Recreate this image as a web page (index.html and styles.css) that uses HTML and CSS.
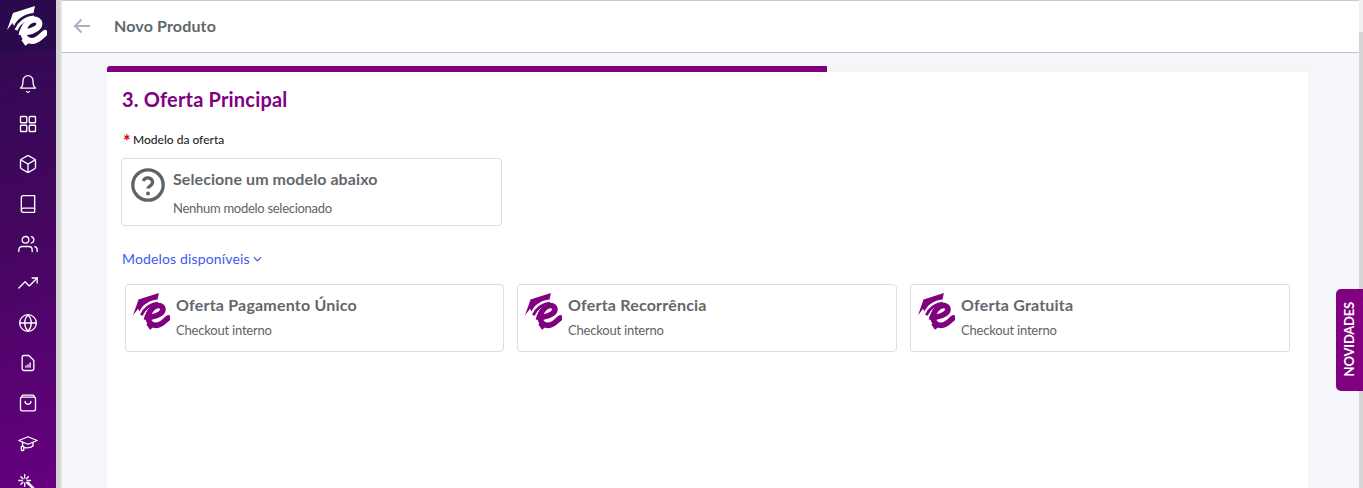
FILE: index.html
```html
<!DOCTYPE html>
<html lang="en">
<head>
  <meta charset="UTF-8" />
  <title>Novo Produto</title>
  <link rel="stylesheet" href="styles.css">
</head>
<body>
  <svg class="defs" width="0" height="0">
    <symbol id="logo" viewBox="0 0 40 40">
      <path d="M0 24 L6 7 L28 0 L26.500 7 C17 8 10 13 7 20 L5.500 17 Z" fill="currentColor"/>
      <path d="M9 24 C12 17 19 11.500 27 11" fill="none" stroke="currentColor" stroke-width="3"/>
      <path d="M13 29 C14 24 17 19 21 15.500" fill="none" stroke="currentColor" stroke-width="3"/>
      <path d="M20 26 C27 25 34 21 32 16 C29 11 20 14 17 23 C15 30 19 35 25 35 C31 35 34 30 38 27" fill="none" stroke="currentColor" stroke-width="6" stroke-linecap="round"/>
      <path d="M16 33 L20 38.500" fill="none" stroke="currentColor" stroke-width="4"/>
    </symbol>
  </svg>

  <!-- Sidebar -->
  <nav class="sidebar">
    <div class="sidebar-logo"><svg class="logo-white"><use href="#logo"/></svg></div>
    <ul class="sidebar-menu">
      <li><svg viewBox="0 0 24 24"><path d="M18 8A6 6 0 0 0 6 8c0 7-3 9-3 9h18s-3-2-3-9"/><path d="M13.730 21a2 2 0 0 1-3.460 0"/></svg></li>
      <li><svg viewBox="0 0 24 24"><rect x="3" y="3" width="7.500" height="7.500" rx="1"/><rect x="13.500" y="3" width="7.500" height="7.500" rx="1"/><rect x="13.500" y="13.500" width="7.500" height="7.500" rx="1"/><rect x="3" y="13.500" width="7.500" height="7.500" rx="1"/></svg></li>
      <li><svg viewBox="0 0 24 24"><path d="M21 16V8a2 2 0 0 0-1-1.730l-7-4a2 2 0 0 0-2 0l-7 4A2 2 0 0 0 3 8v8a2 2 0 0 0 1 1.730l7 4a2 2 0 0 0 2 0l7-4A2 2 0 0 0 21 16z"/><path d="M3.270 6.960 12 12.010l8.730-5.050"/><path d="M12 22.080V12"/></svg></li>
      <li><svg viewBox="0 0 24 24"><path d="M4 19.500A2.500 2.500 0 0 1 6.500 17H20"/><path d="M6.500 2H20v20H6.500A2.500 2.500 0 0 1 4 19.500v-15A2.500 2.500 0 0 1 6.500 2z"/></svg></li>
      <li><svg viewBox="0 0 24 24"><path d="M17 21v-2a4 4 0 0 0-4-4H5a4 4 0 0 0-4 4v2"/><circle cx="9" cy="7" r="4"/><path d="M23 21v-2a4 4 0 0 0-3-3.870"/><path d="M16 3.130a4 4 0 0 1 0 7.750"/></svg></li>
      <li><svg viewBox="0 0 24 24"><path d="M1 18l7.500-7.500 5 5L23 6"/><path d="M17 6h6v6"/></svg></li>
      <li><svg viewBox="0 0 24 24"><circle cx="12" cy="12" r="10"/><path d="M2 12h20"/><path d="M12 2a15.300 15.300 0 0 1 4 10 15.300 15.300 0 0 1-4 10 15.300 15.300 0 0 1-4-10 15.300 15.300 0 0 1 4-10z"/></svg></li>
      <li><svg viewBox="0 0 24 24"><path d="M13 3H7a2 2 0 0 0-2 2v14a2 2 0 0 0 2 2h10a2 2 0 0 0 2-2V9z"/><path d="M9.500 17v-1.500M12 17v-3M14.500 17v-5"/></svg></li>
      <li><svg viewBox="0 0 24 24"><rect x="3" y="5" width="18" height="16.500" rx="2"/><path d="M4 5l1.500-2.500h13L20 5"/><path d="M8.500 10a3.500 3.500 0 0 0 7 0"/></svg></li>
      <li><svg viewBox="0 0 24 24"><path d="M23 9 12 4.500 1 9l11 4.500z"/><path d="M18 11.500v4c-3 2.500-7 2.500-10 2"/><path d="M5.500 11v5"/><rect x="4" y="16" width="3" height="5" rx=".5"/></svg></li>
      <li class="wand"><svg viewBox="0 0 24 24"><path d="M8 2v4M8 12v4M1 9h4M11 9h4M3.500 4.500l2.500 2.500M10 11l2.500 2.500M12.500 4.500 10 7M6 11l-2.500 2.500"/><path class="wand-stick" d="M12 12l12 12"/></svg></li>
    </ul>
  </nav>
  <div class="sidebar-shadow"></div>

  <!-- Main -->
  <div class="main">
    <header class="topbar">
      <svg class="back-icon" viewBox="0 0 18 16"><path d="M17 8H2M8.500 1.500 2 8l6.500 6.500"/></svg>
      <span class="topbar-title">Novo Produto</span>
    </header>

    <div class="content">
      <div class="wizard">
        <div class="progress"><div class="progress-fill"></div></div>
        <div class="panel">
          <h1 class="panel-title">3. Oferta Principal</h1>
          <div class="field-label"><span class="required">*</span>Modelo da oferta</div>

          <div class="model-box">
            <svg class="question-icon" viewBox="0 0 34 34">
              <circle cx="17" cy="17" r="15.200"/>
              <path d="M12.300 13a4.800 4.800 0 0 1 9.300 1.500c0 3.200-4.700 3.800-4.700 6"/>
              <circle class="dot" cx="17" cy="25.500" r="1.900"/>
            </svg>
            <div class="model-text">
              <div class="model-title">Selecione um modelo abaixo</div>
              <div class="model-sub model-sub-box">Nenhum modelo selecionado</div>
            </div>
          </div>

          <a class="models-link">Modelos disponíveis
            <svg viewBox="0 0 10 6"><path d="M1 1l4 4 4-4"/></svg>
          </a>

          <div class="model-grid">
            <div class="model-card">
              <svg class="logo-purple"><use href="#logo"/></svg>
              <div>
                <div class="model-title">Oferta Pagamento Único</div>
                <div class="model-sub">Checkout interno</div>
              </div>
            </div>
            <div class="model-card">
              <svg class="logo-purple"><use href="#logo"/></svg>
              <div>
                <div class="model-title">Oferta Recorrência</div>
                <div class="model-sub">Checkout interno</div>
              </div>
            </div>
            <div class="model-card">
              <svg class="logo-purple"><use href="#logo"/></svg>
              <div>
                <div class="model-title">Oferta Gratuita</div>
                <div class="model-sub">Checkout interno</div>
              </div>
            </div>
          </div>
        </div>
      </div>
    </div>
  </div>

  <div class="scrollbar"><div class="scrollbar-thumb"></div></div>

  <div class="novidades"><span>NOVIDADES</span></div>
</body>
</html>
```

FILE: styles.css
```css
* {
  box-sizing: border-box;
}

html, body {
  height: 100%;
}

body {
  margin: 0;
  display: flex;
  height: 488px;
  overflow: hidden;
  font-family: Lato, Arial, sans-serif;
  background-color: #f4f6fb;
  position: relative;
}

.defs {
  position: absolute;
}

/* Sidebar */
.sidebar {
  width: 56px;
  flex-shrink: 0;
  overflow: hidden;
  background: linear-gradient(160deg, #2f0a50 0%, #43065e 45%, #660080 100%);
}

.sidebar-logo {
  height: 51px;
  background-color: #2a0a4c;
  display: flex;
  padding: 6px 0 0 7px;
}

.logo-white {
  width: 40px;
  height: 40px;
  color: #fff;
}

.sidebar-menu {
  list-style-type: none;
  margin: 0;
  padding: 13px 0 0;
}

.sidebar-menu li {
  height: 39.9px;
  display: flex;
  justify-content: center;
  align-items: center;
}

.sidebar-menu svg {
  width: 20px;
  height: 20px;
  fill: none;
  stroke: #fff;
  stroke-width: 1.6;
  stroke-linecap: round;
  stroke-linejoin: round;
}

.sidebar-menu .wand svg {
  overflow: visible;
}

.wand-stick {
  stroke-width: 3;
}

.sidebar-shadow {
  width: 6px;
  flex-shrink: 0;
  background: linear-gradient(90deg, #d6d4d2 60%, #eceded);
}

/* Main */
.main {
  flex: 1;
  min-width: 0;
  display: flex;
  flex-direction: column;
}

.topbar {
  height: 53px;
  flex-shrink: 0;
  background-color: #fff;
  border-top: 1px solid #d9c3cf;
  border-bottom: 1px solid #bfc1c3;
  display: flex;
  align-items: center;
  padding: 0 0 3px 11px;
}

.back-icon {
  width: 18px;
  height: 16px;
  margin-top: 2px;
  fill: none;
  stroke: #a9b2c1;
  stroke-width: 2;
}

.topbar-title {
  margin-left: 23px;
  font-size: 16px;
  font-weight: 700;
  letter-spacing: 0.15px;
  color: #63676b;
}

.content {
  flex: 1;
  padding: 13px 51px 0 45px;
}

.wizard {
  height: 100%;
  display: flex;
  flex-direction: column;
}

.progress {
  height: 6px;
  background-color: #f5f5f5;
  flex-shrink: 0;
}

.progress-fill {
  width: 720px;
  height: 100%;
  background-color: #800080;
  border-radius: 3px 0 0 0;
}

.panel {
  flex: 1;
  background-color: #fff;
  padding: 14px 18px 0 15px;
}

.panel-title {
  margin: 0;
  font-size: 20px;
  line-height: 26px;
  font-weight: 700;
  letter-spacing: 0.18px;
  color: #800080;
}

.field-label {
  margin-top: 20px;
  margin-left: 1px;
  font-size: 12px;
  line-height: 16px;
  font-weight: 500;
  color: #262626;
}

.required {
  display: inline-block;
  width: 10px;
  color: #d0021b;
  font-size: 18px;
  font-weight: 700;
  line-height: 14px;
  vertical-align: -4px;
}

.model-box {
  width: 381px;
  height: 68px;
  margin-top: 10px;
  margin-left: -1px;
  border: 1px solid #ddd;
  border-radius: 4px;
  display: flex;
  padding: 9px 0 0 9px;
}

.model-text {
  margin-top: -1px;
}

.question-icon {
  width: 34px;
  height: 34px;
  margin-right: 8px;
  flex-shrink: 0;
  fill: none;
  stroke: #5f6368;
  stroke-width: 3.3;
}

.question-icon .dot {
  fill: #5f6368;
  stroke: none;
}

.model-title {
  font-size: 16px;
  line-height: 24px;
  font-weight: 700;
  letter-spacing: 0.08px;
  color: #63676b;
}

.model-card .model-title {
  letter-spacing: 0.2px;
}

.model-sub {
  margin-top: 4px;
  font-size: 13px;
  line-height: 18px;
  letter-spacing: -0.2px;
  color: #5f6368;
}

.model-sub-box {
  margin-top: 8px;
  letter-spacing: -0.28px;
}

.models-link {
  display: inline-flex;
  align-items: center;
  gap: 3px;
  margin-top: 24px;
  font-size: 14px;
  line-height: 18px;
  letter-spacing: 0.15px;
  color: #3d5af1;
}

.models-link svg {
  width: 9px;
  height: 6px;
  fill: none;
  stroke: #3d5af1;
  stroke-width: 1.3;
}

.model-grid {
  display: grid;
  grid-template-columns: 379px 380px 380px;
  gap: 13px;
  margin-top: 16px;
  margin-left: 3px;
}

.model-card {
  height: 68px;
  border: 1px solid #ddd;
  border-radius: 4px;
  display: flex;
  padding: 8px 0 0 7px;
}

.logo-purple {
  width: 37px;
  height: 37px;
  margin-right: 6px;
  flex-shrink: 0;
  color: #800080;
}

/* Right edge */
.scrollbar {
  width: 4px;
  flex-shrink: 0;
  padding-top: 32px;
  background-color: #f1f1f1;
}

.scrollbar-thumb {
  height: 456px;
  background-color: #d6d4d2;
}

.novidades {
  position: absolute;
  top: 289px;
  right: 0;
  width: 27px;
  height: 102px;
  padding: 0 1px 2px 0;
  background-color: #800080;
  border-radius: 5px 0 0 5px;
  display: flex;
  align-items: center;
  justify-content: center;
}

.novidades span {
  writing-mode: vertical-rl;
  transform: rotate(180deg);
  font-size: 13px;
  font-weight: 700;
  letter-spacing: -0.2px;
  color: #fff;
}
```
